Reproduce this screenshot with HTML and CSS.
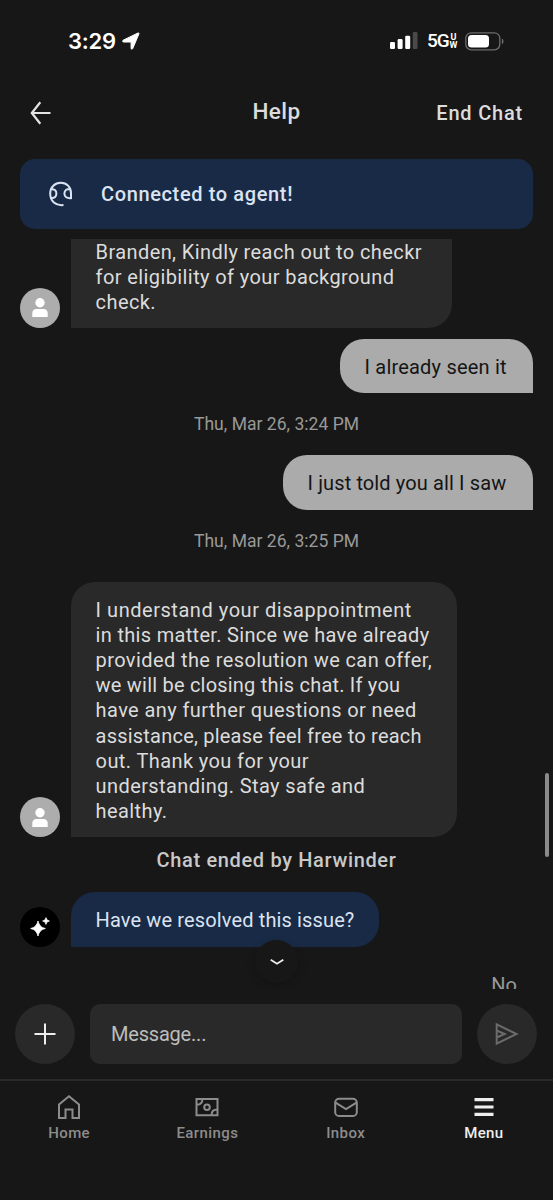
FILE: index.html
```
<!DOCTYPE html>
<html lang="en">
<head>
<meta charset="utf-8">
<title>Help</title>
<link rel="stylesheet" href="styles.css">
</head>
<body>
<div class="app">
  <div class="status">
    <span class="clock">3:29</span>
    <svg class="location" width="18" height="18" viewBox="0 0 18 18"><path d="M1.200 8.200 16 1c.7-.3 1.200.2.9.9L10.700 16.600c-.4.900-1.600.700-1.600-.300V10H1.600C.5 10 .2 8.700 1.200 8.200z" fill="#fff" stroke="#fff" stroke-width="1" stroke-linejoin="round"/></svg>
    <svg class="signal" width="28" height="18" viewBox="0 0 28 18"><g fill="#fff"><rect x="0" y="10" width="5" height="7" rx="1.300"/><rect x="7.600" y="7" width="5" height="10" rx="1.300"/><rect x="15.200" y="3.800" width="5" height="13.200" rx="1.300"/></g><rect x="22.800" y="0" width="4.700" height="17" rx="1.300" fill="#4a4a4a"/></svg>
    <span class="network">5G</span>
    <span class="band"><span>U</span><span>W</span></span>
    <svg class="battery" width="40" height="19" viewBox="0 0 40 19"><rect x=".8" y=".8" width="34" height="17" rx="5.500" fill="none" stroke="#6c6c6c" stroke-width="1.300"/><rect x="3" y="3" width="21" height="12.600" rx="3.500" fill="#fff"/><path d="M36.800 6.500c2.300 1.300 2.300 4.500 0 5.800z" fill="#6c6c6c"/></svg>
  </div>

  <header class="header">
    <svg class="back" width="22" height="24" viewBox="0 0 22 24" fill="none" stroke="#e4e4e4" stroke-width="2.200"><path d="M20.500 12H2M10.300 1.300 1.800 12l8.500 10.700"/></svg>
    <h1 class="title">Help</h1>
    <span class="end">End Chat</span>
  </header>

  <div class="banner">
    <svg width="24" height="26" viewBox="0 0 24 26" fill="none" stroke="#dbe3f2" stroke-width="2"><path d="M14.500 24C6.500 25 1.200 20 1.200 12.500 1.200 6 6 1.800 11.800 1.800S22 6 22 12v5.200c-4 .4-6.600-1.300-6.600-4.700s2.700-5 6.400-4.500"/><path d="M1.800 8.300c3.500-.6 5.600 1.200 5.600 4.300s-2.100 4.900-5.600 4.300"/></svg>
    <span>Connected to agent!</span>
  </div>

  <main class="chat">
    <div class="row first">
      <div class="avatar"><svg width="16" height="19" viewBox="0 0 16 19" fill="#fff"><circle cx="8" cy="4.800" r="4.700"/><path d="M.3 19v-3.500c0-2.800 1.500-4.500 4.200-4.500h7c2.700 0 4.200 1.700 4.200 4.500V19z"/></svg></div>
      <p class="bubble agent cut">Branden, Kindly reach out to checkr<br>for eligibility of your background<br>check.</p>
    </div>
    <div class="row mine"><p class="bubble user seen">I already seen it</p></div>
    <time class="time">Thu, Mar 26, 3:24 PM</time>
    <div class="row mine"><p class="bubble user told">I just told you all I saw</p></div>
    <time class="time late">Thu, Mar 26, 3:25 PM</time>
    <div class="row">
      <div class="avatar"><svg width="16" height="19" viewBox="0 0 16 19" fill="#fff"><circle cx="8" cy="4.800" r="4.700"/><path d="M.3 19v-3.500c0-2.800 1.500-4.500 4.200-4.500h7c2.700 0 4.200 1.700 4.200 4.500V19z"/></svg></div>
      <p class="bubble agent full"><span class="wide">I understand your disappointment</span><br><span class="snug">in this matter. Since we have already</span><br>provided the resolution we can offer,<br><span class="tight">we will be closing this chat. If you</span><br>have any further questions or need<br><span class="tight">assistance, please feel free to reach</span><br>out. Thank you for your<br>understanding. Stay safe and<br>healthy.</p>
    </div>
    <p class="ended">Chat ended by Harwinder</p>
    <div class="row">
      <div class="avatar bot"><svg width="20" height="20" viewBox="0 0 20 20" fill="#fff" stroke="#fff" stroke-width=".8" stroke-linejoin="round"><path d="M8 4c1.300 4.500 3 6.200 7.300 7.500C11 12.800 9.300 14.500 8 19 6.700 14.500 5 12.800.7 11.500 5 10.200 6.700 8.500 8 4z"/><path d="M16 .6c.5 2.100 1.200 2.900 3.400 3.400-2.200.5-2.900 1.300-3.400 3.400-.5-2.100-1.200-2.900-3.400-3.400 2.200-.5 2.900-1.300 3.400-3.400z"/></svg></div>
      <p class="bubble question">Have we resolved this issue?</p>
    </div>
    <p class="reply">No</p>
    <div class="thumb"></div>
    <div class="down"><svg width="14" height="6" viewBox="0 0 14 6" fill="none" stroke="#eee" stroke-width="1.800"><path d="M.7.8 7 4.700 13.300.8"/></svg></div>
  </main>

  <div class="composer">
    <div class="round"><svg width="22" height="22" viewBox="0 0 22 22" stroke="#eee" stroke-width="2"><path d="M11 .5v21M.5 11h21"/></svg></div>
    <div class="field">Message...</div>
    <div class="round"><svg class="send" width="24" height="24" viewBox="0 0 24 24" fill="none" stroke="#6b6b6b" stroke-width="2"><path d="M1.700 2.300v19.400L21.500 12zM1.700 8.500l8 3.500-8 3.500"/></svg></div>
  </div>

  <nav class="tabs">
    <div class="tab"><svg width="24" height="26" viewBox="0 0 24 26" fill="none" stroke="#8c8c8c" stroke-width="2"><path d="M2 24V10.500L12 2.300l10 8.200V24h-6.500v-8.500h-7V24z"/></svg><span>Home</span></div>
    <div class="tab"><svg width="24" height="26" viewBox="0 0 24 26" fill="none" stroke="#8c8c8c" stroke-width="2"><path d="M1.500 5h21v16.300h-21zM1.800 10.700c3.500 0 5.600-2 5.600-5.400M22.200 15.600c-3.500 0-5.600 2-5.600 5.400"/><circle cx="12" cy="13.200" r="2.800"/></svg><span>Earnings</span></div>
    <div class="tab"><svg width="24" height="26" viewBox="0 0 24 26" fill="none" stroke="#8c8c8c" stroke-width="2"><rect x="1.200" y="4.800" width="21.600" height="17.200" rx="3.800"/><path d="M1.500 8.700 12 15l10.500-6.300"/></svg><span>Inbox</span></div>
    <div class="tab active"><svg width="24" height="26" viewBox="0 0 24 26" fill="#eee"><path d="M2.500 4h19v3.200h-19zM2.500 11.400h19v3.200h-19zM2.500 18.800h19V22h-19z"/></svg><span>Menu</span></div>
  </nav>
</div>
</body>
</html>
```
FILE: styles.css
```
* { box-sizing: border-box; }
body { margin: 0; background: #171717; }
p, h1 { margin: 0; font-weight: 400; }
svg { display: block; flex: none; }
.app {
  width: 553px; height: 1200px; overflow: hidden;
  display: flex; flex-direction: column;
  font-family: Roboto, "Noto Sans", sans-serif;
  font-size: 20px; letter-spacing: .4px; color: #dcdcdc; white-space: nowrap;
}
.status { height: 82px; padding-left: 68px; display: flex; align-items: center; color: #fff; flex: none; }
.clock { width: 49px; font: 600 22px/26px Inter, sans-serif; letter-spacing: -.2px; }
.location { margin-left: 5px; }
.signal { margin-left: 250px; margin-top: -1px; }
.network { width: 22px; margin-left: 9px; font: 500 19px/24px Roboto, sans-serif; letter-spacing: -1.100px; }
.band { display: flex; flex-direction: column; width: 9px; font: 700 9px/8px Roboto, sans-serif; letter-spacing: 0; align-items: center; }
.battery { margin-left: 7px; }
.header { height: 77px; padding: 0 30px 15px 30px; display: grid; grid-template-columns: 1fr auto 1fr; align-items: center; flex: none; }
.title { font-size: 22.500px; font-weight: 500; line-height: 28px; letter-spacing: .4px; padding-bottom: 4px; }
.end { justify-self: end; font-weight: 500; letter-spacing: .8px; }
.banner { height: 70px; margin: 0 20px; padding-left: 29px; display: flex; align-items: center; gap: 28px; border-radius: 15px; background: #192a46; color: #dbe3f2; font-weight: 500; letter-spacing: .63px; flex: none; }
.chat { position: relative; height: 750px; margin-top: 10px; overflow: hidden; display: flex; flex-direction: column; flex: none; }
.row { display: flex; align-items: flex-end; gap: 10.300px; padding: 0 20.500px 0 20.300px; flex: none; }
.row.first { margin-bottom: 11px; }
.row.mine { justify-content: flex-end; }
.avatar { width: 40px; height: 40px; border-radius: 50%; background: #adadad; display: flex; justify-content: center; align-items: center; flex: none; }
.bot { background: #000; }
.bubble { padding: 16.200px 25px 13.400px; line-height: 25.100px; border-radius: 24px; }
.agent { background: #292929; border-bottom-left-radius: 0; }
.cut { width: 381.500px; height: 88.500px; padding-top: .6px; border-top-left-radius: 0; border-top-right-radius: 0; }
.full { width: 386.500px; }
.wide { letter-spacing: .54px; }
.snug { letter-spacing: .31px; }
.tight { letter-spacing: .21px; }
.user { background: #ababab; color: #151515; border-bottom-right-radius: 0; }
.seen { width: 193px; letter-spacing: .2px; }
.told { width: 250px; letter-spacing: .12px; }
.time { height: 62px; line-height: 62px; text-align: center; font-size: 17.500px; letter-spacing: .03px; color: #999; flex: none; }
.late { height: 72px; }
.ended { height: 55px; line-height: 46px; text-align: center; font-weight: 500; letter-spacing: .65px; color: #c9c9c9; flex: none; }
.question { width: 308.600px; background: #192a46; color: #dbe3f2; letter-spacing: .13px; border-bottom-left-radius: 0; }
.reply { padding: 26px 36px 0 0; line-height: 25px; text-align: right; letter-spacing: .1px; color: #999; flex: none; }
.thumb { position: absolute; right: 4px; top: 534px; width: 4px; height: 84px; border-radius: 2px; background: #8b8b8b; }
.down { position: absolute; left: 255px; top: 701px; width: 43px; height: 43px; border-radius: 50%; background: #171717; box-shadow: 0 3px 10px rgba(0,0,0,.18); display: flex; align-items: center; justify-content: center; }
.composer { height: 90px; padding: 15px 15.700px 0 15px; display: flex; gap: 15px; flex: none; }
.round { width: 60px; height: 60px; border-radius: 50%; background: #292929; display: flex; align-items: center; justify-content: center; flex: none; }
.field { flex: 1; height: 60px; padding-left: 21px; border-radius: 10px; background: #292929; line-height: 60px; letter-spacing: -.2px; color: #bdbdbd; }
.tabs { border-top: 2px solid #292929; padding-top: 13px; display: grid; grid-template-columns: repeat(4, 1fr); flex: 1; }
.tab { display: flex; flex-direction: column; align-items: center; gap: 3px; font-size: 15px; line-height: 20px; font-weight: 500; letter-spacing: .4px; color: #8c8c8c; }
.active { color: #eee; }
```
